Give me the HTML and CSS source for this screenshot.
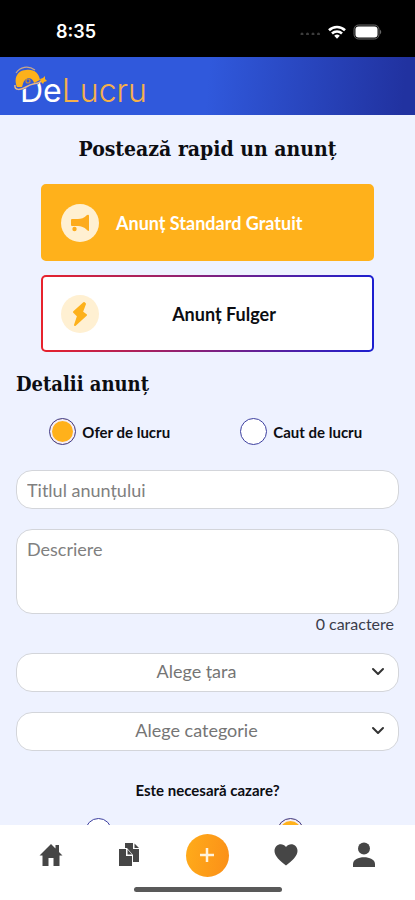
FILE: index.html
```html
<!DOCTYPE html>
<html lang="ro">
<head>
<meta charset="utf-8">
<meta name="viewport" content="width=device-width, initial-scale=1">
<title>DeLucru</title>
<link rel="stylesheet" href="styles.css">
</head>
<body>
<div class="status">
  <span class="time">8:35</span>
  <div class="status-icons">
    <svg width="22" height="6" viewBox="0 0 22 6" fill="#3c3c3c" aria-hidden="true"><circle cx="3" cy="5" r="1.500"/><circle cx="8.500" cy="5" r="1.500"/><circle cx="14" cy="5" r="1.500"/><circle cx="19.500" cy="5" r="1.500"/></svg>
    <svg width="20" height="16" viewBox="0 0 20 16" fill="none" stroke="#fff" stroke-width="2.600" aria-hidden="true"><path d="M2 6.200a11.500 11.500 0 0 1 16 0"/><path d="M5 9.500a7.200 7.200 0 0 1 10 0"/><path d="M7.200 11.800a4 4 0 0 1 5.600 0L10 14.800z" fill="#fff" stroke="none"/></svg>
    <svg width="30" height="16" viewBox="0 0 30 16" aria-hidden="true"><rect x="1" y="1" width="25" height="14" rx="4.500" fill="#111" stroke="#666"/><rect x="2.500" y="2.500" width="22" height="11" rx="3" fill="#fff"/><path d="M27 5.500q2.500 2.500 0 5z" fill="#666"/></svg>
  </div>
</div>
<header class="header">
  <a class="logo" href="#" aria-label="DeLucru">
    <span class="logo-de">De</span><span class="logo-lucru">Lucru</span>
    <svg class="helmet" width="34" height="28" viewBox="0 0 34 28" fill="none" aria-hidden="true">
      <path d="M5 12h20v6l-10 3-9 4z" fill="#3059dc"/>
      <path d="M3 21C-1 12 4 4 12 4c8-1 13 3 14 10l-6 3c-1-5-6-6-9-3-2 2-2 4-3 7z" fill="#fdb11b"/>
      <path d="M2 7C6 1 14-1 21 4" stroke="#c9a78a" stroke-width="1.200"/>
      <path d="M1 19c-1 6 6 5 11 2s8-3 12-4 3-3 6-4" stroke="#e8b98a" stroke-width="1.500"/>
      <path d="M26 13l3-1 2-2v3l2 2-3 1-1 2-2-2z" fill="#fdb11b"/>
      <circle cx="14" cy="15" r="2" stroke="#c98b3c" stroke-width="1.200"/>
    </svg>
  </a>
</header>
<main class="main">
  <h1>Postează rapid un anunț</h1>
  <div class="types">
    <button class="type type-standard" type="button">
      <span class="bubble"><svg width="20" height="20" viewBox="0 0 20 20" fill="#fdab1c" aria-hidden="true"><path d="M2 6h6c3 0 6-1 9-4q2-1 2 1v14q0 2-2 0c-3-3-6-4-9-4H2q-1 0-1-1V7q0-1 1-1z"/><circle cx="4.500" cy="16" r="2.200"/></svg></span>
      <span class="type-label">Anunț Standard Gratuit</span>
    </button>
    <button class="type type-flash" type="button">
      <span class="bubble"><svg width="18" height="26" viewBox="0 0 18 26" fill="#fdb11b" stroke="#fdb11b" stroke-width="2" stroke-linejoin="round" aria-hidden="true"><path d="M13 2L3 11l4 4-3 9L15 14l-4-3 3-8z"/></svg></span>
      <span class="type-label">Anunț Fulger</span>
    </button>
  </div>
  <form class="form">
    <h2>Detalii anunț</h2>
    <div class="choices">
      <label class="choice"><input type="radio" name="kind" checked>Ofer de lucru</label>
      <label class="choice"><input type="radio" name="kind">Caut de lucru</label>
    </div>
    <input class="field" type="text" placeholder="Titlul anunțului" aria-label="Titlul anunțului">
    <textarea class="field area" placeholder="Descriere" aria-label="Descriere"></textarea>
    <p class="count">0 caractere</p>
    <div class="select">
      <select class="field" aria-label="Alege țara"><option>Alege țara</option></select>
      <svg width="14" height="9" viewBox="0 0 14 9" fill="none" stroke="#333" stroke-width="2" stroke-linecap="round" stroke-linejoin="round" aria-hidden="true"><path d="M2 2l5 5 5-5"/></svg>
    </div>
    <div class="select">
      <select class="field" aria-label="Alege categorie"><option>Alege categorie</option></select>
      <svg width="14" height="9" viewBox="0 0 14 9" fill="none" stroke="#333" stroke-width="2" stroke-linecap="round" stroke-linejoin="round" aria-hidden="true"><path d="M2 2l5 5 5-5"/></svg>
    </div>
    <p class="question">Este necesară cazare?</p>
    <div class="choices housing">
      <label class="choice"><input type="radio" name="housing" aria-label="Da"></label>
      <label class="choice"><input type="radio" name="housing" aria-label="Nu" checked></label>
    </div>
  </form>
</main>
<footer class="bottom">
  <nav class="nav">
    <a href="#" aria-label="Acasă"><svg width="24" height="24" viewBox="0 0 24 24" fill="#464646" aria-hidden="true"><path d="M12 1L0.500 12.500h3V23h6v-8h5v8h6V12.500h3L20 9V2h-3.500v3.500z"/></svg></a>
    <a href="#" aria-label="Anunțuri"><svg width="24" height="24" viewBox="0 0 24 24" fill="#464646" aria-hidden="true"><path d="M8 0h8v6h6v13h-6v-7l-6-7H8z"/><path d="M17.500 .5l4.500 4.500h-4.500z"/><path d="M2 6h7v7h6v10H2z"/><path d="M10.500 6.500l4.500 5h-4.500z"/></svg></a>
    <a class="add" href="#" aria-label="Adaugă anunț"><svg width="16" height="16" viewBox="0 0 16 16" stroke="#fff3dc" stroke-width="2.500" aria-hidden="true"><path d="M8 1v14M1 8h14"/></svg></a>
    <a href="#" aria-label="Favorite"><svg width="24" height="24" viewBox="0 0 24 24" fill="#464646" aria-hidden="true"><path d="M12 22.500C6 18 .5 13 .5 8c0-7 8-9 11.500-4C15.500-1 23.500 1 23.500 8c0 5-5.500 10-11.500 14.500z"/></svg></a>
    <a href="#" aria-label="Profil"><svg width="24" height="26" viewBox="0 0 24 26" fill="#464646" aria-hidden="true"><circle cx="12" cy="6.500" r="6"/><path d="M1 25v-3c0-9 22-9 22 0v3z"/></svg></a>
  </nav>
  <div class="home-bar"></div>
</footer>
</body>
</html>
```
FILE: styles.css
```css
* { box-sizing: border-box; }
body {
  margin: 0;
  height: 100vh;
  display: flex;
  flex-direction: column;
  overflow: hidden;
  background: #eef2ff;
  color: #0c0d12;
  font-family: Lato, "Noto Sans", sans-serif;
}
a { text-decoration: none; }
h1, h2, p { margin: 0; }
.status {
  flex: none;
  height: 57px;
  padding: 6px 32px 0 56px;
  display: flex;
  align-items: center;
  justify-content: space-between;
  background: #000;
  color: #fff;
}
.time { font: 600 18px/24px Inter, sans-serif; }
.status-icons { display: flex; align-items: center; gap: 6px; }
.header {
  flex: none;
  height: 58px;
  padding: 0 14px;
  display: flex;
  align-items: center;
  background: linear-gradient(95deg, #3059dc 50%, #2132a0 97%);
}
.logo {
  position: relative;
  display: flex;
  padding: 10px 0 0 6px;
  font: 300 32px/36px Inter, sans-serif;
}
.helmet { position: absolute; left: 0; top: 3px; }
.logo-de { color: #fff; font-weight: 400; }
.logo-lucru { color: #f5b04a; }
.main { flex: 1; min-height: 0; overflow: hidden; padding: 20px 16px 0; }
h1, h2 {
  font-family: "DejaVu Serif Condensed", "DejaVu Serif", serif;
  font-weight: 700;
  line-height: 28px;
}
h1 { text-align: center; font-size: 21px; }
h2 { font-size: 20px; }
.types { display: grid; gap: 14px; margin: 21px 25px 0; }
.type {
  display: flex;
  align-items: center;
  height: 77px;
  padding: 0 18px;
  border: 2px solid transparent;
  border-radius: 5px;
  font: 700 18px/24px Lato, sans-serif;
}
.type-standard { background: #ffb11b; border-color: #ffb11b; color: #fff; }
.type-flash {
  background: linear-gradient(#fff, #fff) padding-box, linear-gradient(90deg, #e8222c, #1c1fd0) border-box;
  color: #0c0d12;
}
.type-flash .type-label { flex: 1; text-align: center; padding-right: 22px; }
.bubble {
  flex: none;
  width: 38px;
  height: 38px;
  margin-right: 17px;
  display: grid;
  place-items: center;
  border-radius: 50%;
  background: #fff0d2;
}
.form { display: flex; flex-direction: column; margin-top: 18px; }
.choices { display: grid; grid-template-columns: 1fr 1fr; margin-top: 20px; }
.choice {
  display: flex;
  align-items: center;
  justify-content: center;
  gap: 6px;
  padding-right: 4px;
  font-size: 15px;
  line-height: 26px;
  font-weight: 700;
}
.choice input {
  appearance: none;
  width: 27px;
  height: 27px;
  margin: 0;
  border: 1px solid #3c3f9f;
  border-radius: 50%;
  background: #fff;
}
.choice input:checked { background: #ffb11b; box-shadow: inset 0 0 0 2px #f3eefa; }
.housing { margin-top: 18px; }
.housing .choice { padding-right: 26px; }
.field {
  width: 100%;
  height: 39px;
  margin: 0;
  padding: 0 10px;
  border: 1px solid #d3d5da;
  border-radius: 16px;
  background: #fff;
  color: #757575;
  font: 400 18px/24px Lato, sans-serif;
}
.field::placeholder { color: #808080; opacity: 1; }
input.field { margin-top: 25px; }
.area { height: 85px; margin-top: 20px; padding: 7px 10px; resize: none; }
.count { padding-right: 5px; text-align: right; font-size: 16px; line-height: 19px; color: #3a3c4a; }
.select { display: grid; align-items: center; margin-top: 20px; }
.select > * { grid-area: 1 / 1; }
.select svg { justify-self: end; margin: 0 14px 3px 0; pointer-events: none; }
.select .field { appearance: none; padding: 0 32px 4px 10px; text-align: center; text-align-last: center; }
.question { margin-top: 29px; text-align: center; font-size: 15px; font-weight: 700; line-height: 20px; }
.bottom { flex: none; height: 75px; background: #fff; }
.nav {
  display: grid;
  grid-template-columns: repeat(5, 1fr);
  place-items: center;
  height: 60px;
  padding: 0 12px;
}
.nav a { display: grid; place-items: center; }
.nav .add {
  width: 43px;
  height: 43px;
  border-radius: 50%;
  background: linear-gradient(100deg, #ffac1a, #fb8f18);
}
.home-bar { width: 148px; height: 5px; margin: 2px auto 0; border-radius: 3px; background: #595959; }
```
